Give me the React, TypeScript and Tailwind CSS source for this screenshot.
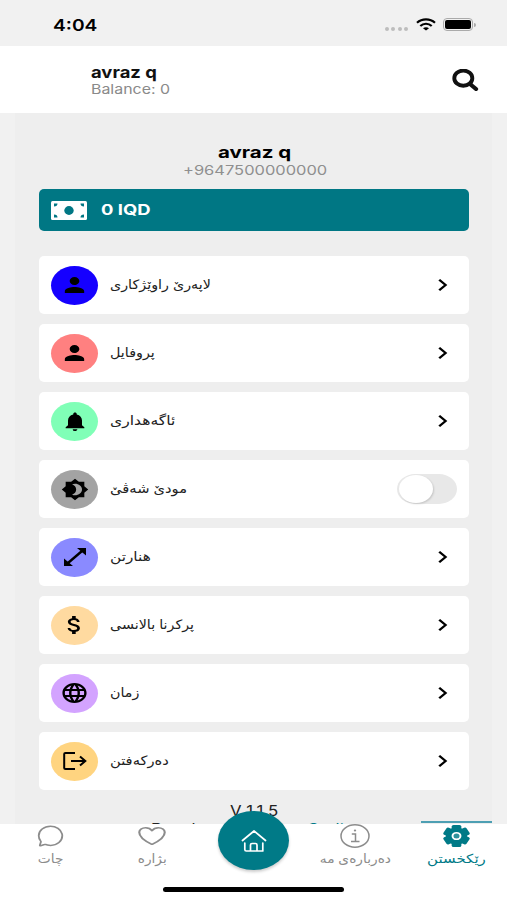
import { type ReactNode } from 'react';
import { clsx } from 'clsx';
import { MdPerson, MdNotifications, MdBrightness4, MdAttachMoney, MdLanguage, MdChevronRight } from 'react-icons/md';
import { IoChatbubbleOutline, IoHeartOutline } from 'react-icons/io5';

interface MenuItem {
  label: string;
  color: string;
  icon: ReactNode;
  /** Horizontal stretch of the label */
  stretch?: string;
  toggle?: boolean;
}

const iconProps = { preserveAspectRatio: 'none' };

const SearchIcon = () => (
  <svg viewBox="0 0 27 22" className="h-[22px] w-[27px]" fill="none" stroke="#111">
    <ellipse cx="11.300" cy="9.200" rx="9" ry="7.600" strokeWidth="3.900" />
    <path d="M18 15 24 20" strokeWidth="4.200" strokeLinecap="round" />
  </svg>
);

const CashIcon = () => (
  <svg viewBox="0 0 36 19" className="h-[19px] w-9">
    <rect width="36" height="19" rx="1.500" fill="#fff" />
    <g className="fill-[#007784]">
      <ellipse cx="18" cy="9.500" rx="4.700" ry="4.400" />
      <path d="M3 2.500h3.500A3.500 3 0 0 1 3 5.500zM33 2.500v3a3.500 3 0 0 1-3.500-3zM3 16.500v-3a3.500 3 0 0 1 3.500 3zM33 16.500h-3.500a3.500 3 0 0 1 3.500-3z" />
    </g>
  </svg>
);

const ExpandIcon = () => (
  <svg viewBox="0 0 22 18" className="h-[18px] w-[22px]">
    <path d="M4 15 18 3" stroke="currentColor" strokeWidth="2.400" />
    <path d="M13 0h9v7.500zM0 10.500V18h9z" fill="currentColor" />
  </svg>
);

const LogoutIcon = () => (
  <svg viewBox="0 0 24 18" className="h-[18px] w-[24px]" fill="none" stroke="currentColor" strokeWidth="2">
    <path d="M12 1H2.500Q1.200 1 1.200 2v14q0 1 1.300 1H12M8 9h14M17 4.500 22.300 9 17 13.500" />
  </svg>
);

const HomeIcon = () => (
  <svg viewBox="0 0 26 24" className="h-6 w-[26px]" fill="none" stroke="currentColor" strokeWidth="1.700" strokeLinecap="round" strokeLinejoin="round">
    <path d="M1.500 11.500 13 2l11.500 9.500M3.800 14v6.500q0 1.500 1.500 1.500h16.500v-8M9.500 22v-6q0-1.500 1.500-1.500h3.500q1.500 0 1.500 1.500v6" />
  </svg>
);

const InfoIcon = () => (
  <svg viewBox="0 0 30 24" className="h-6 w-[30px]" fill="none" stroke="currentColor" strokeWidth="1.500">
    <ellipse cx="15" cy="12" rx="14" ry="11.200" />
    <path d="M11.800 10h3.700v7.500M11 17.500h8.500" />
    <ellipse cx="15" cy="6.500" rx="1.200" ry="1" fill="currentColor" stroke="none" />
  </svg>
);

const GearIcon = () => (
  <svg viewBox="-12 -12 24 24" preserveAspectRatio="none" className="h-6 w-[29px]">
    <g fill="currentColor">
      <circle r="8.800" />
      {[0, 60, 120].map((angle) => (
        <rect key={angle} x="-4" y="-11" width="8" height="22" rx="1.500" transform={`rotate(${angle})`} />
      ))}
    </g>
    <circle r="3.300" fill="#2f929c" stroke="#fff" strokeWidth="1.600" />
  </svg>
);

const items: MenuItem[] = [
  { label: 'لاپەرێ راوێژکاری', color: 'bg-[#1500ff]', icon: <MdPerson {...iconProps} className="h-6 w-[29px]" /> },
  { label: 'پروفایل', color: 'bg-[#ff8080]', icon: <MdPerson {...iconProps} className="h-6 w-[29px]" /> },
  { label: 'ئاگەهداری', color: 'bg-[#80ffb7]', icon: <MdNotifications {...iconProps} className="h-[23px] w-[28px]" />, stretch: 'scale-x-[1.2]' },
  { label: 'مودێ شەڤێ', color: 'bg-[#a3a3a3]', icon: <MdBrightness4 {...iconProps} className="h-[23px] w-[28px]" />, stretch: 'scale-x-[1.13]', toggle: true },
  { label: 'هنارتن', color: 'bg-[#8a8aff]', icon: <ExpandIcon />, stretch: 'scale-x-[1.18]' },
  { label: 'پرکرنا بالانسی', color: 'bg-[#ffdaa0]', icon: <MdAttachMoney {...iconProps} className="h-6 w-[29px]" /> },
  { label: 'زمان', color: 'bg-[#d3a3ff]', icon: <MdLanguage {...iconProps} className="h-6 w-[29px]" /> },
  { label: 'دەرکەفتن', color: 'bg-[#ffd480]', icon: <LogoutIcon />, stretch: 'scale-x-[1.13]' },
];

function StatusBar() {
  return (
    <div className="flex h-[46px] items-center justify-between bg-[#f1f1f1] pt-[3px] pr-[31px] pl-[53px]">
      <span className="origin-left scale-x-[1.2] text-[16px] font-semibold leading-5">4:04</span>
      <div className="flex items-center">
        <div className="mt-2 mr-2 flex gap-[2.500px]">
          {[0, 1, 2, 3].map((i) => (
            <span key={i} className="h-1 w-1 rounded-full bg-[#bdbdbd]" />
          ))}
        </div>
        <svg viewBox="0 0 20 13" className="mr-[7px] h-[13px] w-5" fill="none" stroke="#000" strokeWidth="2.200">
          <path d="M1 4.800C6 .2 14 .2 19 4.800M4.300 8C7.500 5 12.500 5 15.700 8" />
          <path d="M7 10.200c1.800-1.400 4.200-1.400 6 0L10 12.600z" fill="#000" stroke="none" />
        </svg>
        <div className="flex h-[13px] w-[30px] rounded-[4px] border border-[#aaa] p-px">
          <span className="flex-1 rounded-[2px] bg-black" />
        </div>
        <span className="ml-px h-1 w-[2px] rounded-r-full bg-[#aaa]" />
      </div>
    </div>
  );
}

function Header() {
  return (
    <header className="flex h-[67px] items-center justify-between bg-white pr-[28px] pl-[91px]">
      <div className="flex flex-col items-start pt-[2px]">
        <span className="origin-left scale-x-[1.15] text-[16px] font-bold leading-[18px] text-[#111]">avraz q</span>
        <span className="origin-left scale-x-[1.18] text-[13.500px] leading-[17px] text-[#8a8a8a]">Balance: 0</span>
      </div>
      <SearchIcon />
    </header>
  );
}

function MenuRow({ label, color, icon, stretch = 'scale-x-[1.1]', toggle }: MenuItem) {
  return (
    <div className="flex h-[58px] items-center rounded-[5px] bg-white px-3">
      <div className={clsx('flex h-[39px] w-[47px] items-center justify-center rounded-[50%] text-black', color)}>{icon}</div>
      <span dir="rtl" className={clsx('ml-3 origin-left text-[13px] text-[#222]', stretch)}>
        {label}
      </span>
      {toggle ? (
        <div className="ml-auto h-[30px] w-[60px] rounded-[18px/15px] bg-[#e8e8e8] p-px">
          <div className="ml-px h-7 w-[34px] rounded-[50%] bg-white shadow-[1px_1px_2px_rgba(0,0,0,0.15)]" />
        </div>
      ) : (
        <MdChevronRight {...iconProps} className="ml-auto h-6 w-[29px]" />
      )}
    </div>
  );
}

function Tab({ label, icon, active }: { label: string; icon: ReactNode; active?: boolean }) {
  return (
    <div
      className={clsx(
        'flex h-full w-[71px] flex-col items-center whitespace-nowrap',
        active ? 'text-[#007a87]' : 'text-[#8c8c8c]',
      )}
    >
      {icon}
      <span dir="rtl" className={clsx('text-[12.500px] leading-[22px]', active ? 'scale-x-[1.2]' : 'scale-x-[1.1]')}>
        {label}
      </span>
    </div>
  );
}

function TabBar() {
  return (
    <nav className="relative h-[76px] bg-white">
      <div className="flex h-[50px] justify-between px-[15px]">
        <Tab label="چات" icon={<IoChatbubbleOutline {...iconProps} className="h-6 w-[29px]" />} />
        <Tab label="بژارە" icon={<IoHeartOutline {...iconProps} className="h-6 w-[34px]" />} />
        <div className="relative -top-[13px] flex h-[59px] w-[71px] shrink-0 items-center justify-center rounded-[50%] bg-[#007a87] text-white shadow-[0_2px_3px_rgba(0,0,0,0.2)]">
          <HomeIcon />
        </div>
        <Tab label="دەربارەی مە" icon={<InfoIcon />} />
        <Tab active label="رێکخستن" icon={<GearIcon />} />
      </div>
      <div className="absolute -top-[3px] right-[15px] h-0.5 w-[71px] bg-[#4d9fb3]" />
      <div className="mx-auto mt-[13px] h-[5px] w-[181px] rounded-full bg-black" />
    </nav>
  );
}

export default function App() {
  return (
    <div className="flex h-[900px] w-[507px] flex-col overflow-hidden bg-[#f1f1f1] font-['Inter','DejaVu_Sans',sans-serif]">
      <StatusBar />
      <Header />
      <main className="mx-[15px] min-h-0 flex-1 overflow-hidden bg-[#eee] pt-[29px] pr-[23px] pl-6">
        <div className="flex flex-col items-center pl-[2px]">
          <h1 className="scale-x-[1.28] text-[16px] font-bold leading-5">avraz q</h1>
          <p className="scale-x-[1.22] text-[13.500px] leading-[17px] text-[#8f8f8f]">+9647500000000</p>
        </div>
        <div className="mt-[10px] flex h-[42px] items-center rounded-[5px] bg-[#007784] pl-3 text-white">
          <CashIcon />
          <span className="ml-[14px] origin-left scale-x-[1.27] text-[14.500px] font-bold">0 IQD</span>
        </div>
        <div className="mt-[25px] flex flex-col gap-[10px]">
          {items.map((item) => (
            <MenuRow key={item.label} {...item} />
          ))}
        </div>
        <div className="mt-3 text-[14px] leading-[18px] text-[#222]">
          <p className="text-center">
            <span className="inline-block scale-x-[1.2]">V 1.1.5</span>
          </p>
          <p className="flex pl-28">
            <span className="origin-left scale-x-[1.2]">Developed by</span>
            <span className="ml-[65px] origin-left scale-x-[1.2] text-[#007a87]">Coding</span>
          </p>
        </div>
      </main>
      <TabBar />
    </div>
  );
}
